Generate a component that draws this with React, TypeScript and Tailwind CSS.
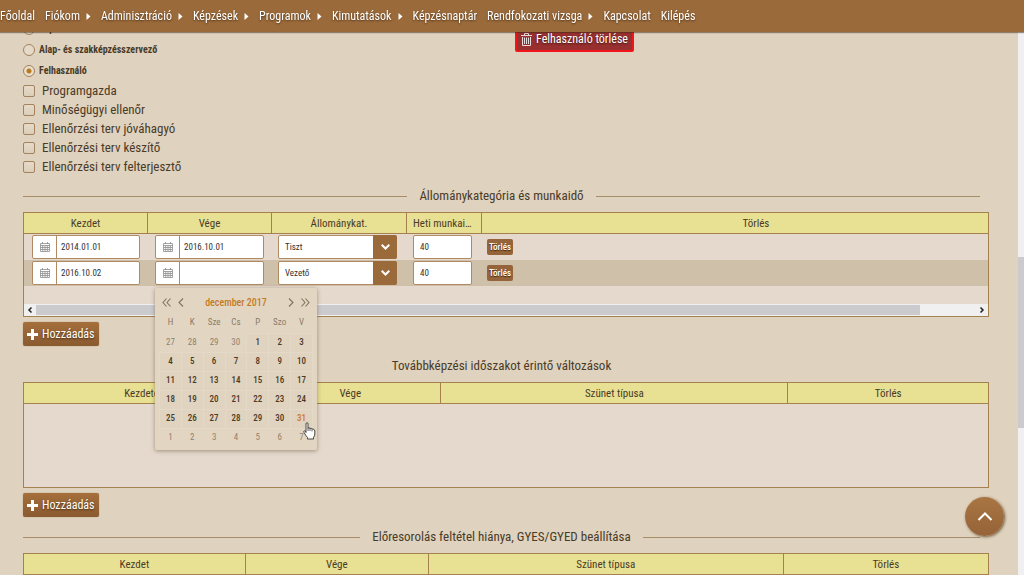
import { useState } from 'react';

const NAV = [
  { label: 'Főoldal', sub: false },
  { label: 'Fiókom', sub: true },
  { label: 'Adminisztráció', sub: true },
  { label: 'Képzések', sub: true },
  { label: 'Programok', sub: true },
  { label: 'Kimutatások', sub: true },
  { label: 'Képzésnaptár', sub: false },
  { label: 'Rendfokozati vizsga', sub: true },
  { label: 'Kapcsolat', sub: false },
  { label: 'Kilépés', sub: false },
];

const ROLES = ['Képzésszervező', 'Alap- és szakképzésszervező', 'Felhasználó'];

const PERMISSIONS = [
  'Programgazda',
  'Minőségügyi ellenőr',
  'Ellenőrzési terv jóváhagyó',
  'Ellenőrzési terv készítő',
  'Ellenőrzési terv felterjesztő',
];

const WEEKDAYS = ['H', 'K', 'Sze', 'Cs', 'P', 'Szo', 'V'];

// Monday 27 November 2017 is the first cell
const WEEKS = Array.from({ length: 6 }, (_, w) =>
  Array.from({ length: 7 }, (_, d) => {
    const date = new Date(2017, 10, 27 + w * 7 + d);
    return { day: date.getDate(), current: date.getMonth() === 11 };
  }),
);

const Header = () => {
  return (
    <header className="fixed inset-x-0 top-0 z-20 h-8 bg-[#9b6a3a] shadow-[0_1px_1px_rgba(60,40,20,0.5)]">
      <nav className="flex h-full items-center gap-2.5 text-xs text-white [text-shadow:0_1px_2px_rgba(50,30,10,0.7)]">
        {NAV.map((item) => (
          <a key={item.label} href="#" className="flex items-center gap-1.5 whitespace-nowrap">
            {item.label}
            {item.sub && (
              <svg width="5" height="7" viewBox="0 0 5 7" aria-hidden="true">
                <path d="M0.5 0 L4.5 3.5 L0.5 7 Z" fill="#fff" />
              </svg>
            )}
          </a>
        ))}
      </nav>
    </header>
  );
};

const RoleSection = () => {
  const [role, setRole] = useState('Felhasználó');
  return (
    <div>
      {ROLES.map((name) => (
        <label key={name} className="flex h-[21px] items-center gap-1 text-[10px] font-bold">
          <input
            type="radio"
            name="role"
            checked={role === name}
            onChange={() => setRole(name)}
            className="size-3 appearance-none rounded-full border border-[#a3835f] bg-[#e5d9c8] checked:bg-[radial-gradient(circle,#b8791f_2px,#e9dfcc_3px)]"
          />
          {name}
        </label>
      ))}
      {PERMISSIONS.map((name) => (
        <label key={name} className="flex h-[19px] items-center gap-[7px] text-[13px]">
          <input
            type="checkbox"
            className="size-3 appearance-none rounded-xs border border-[#a3835f] bg-linear-to-b from-[#e6dac9] to-[#dccfb9] checked:from-[#9b6a3a] checked:to-[#9b6a3a]"
          />
          {name}
        </label>
      ))}
    </div>
  );
};

const DeleteUserButton = () => {
  return (
    <button className="mt-2 flex h-[26px] items-center gap-1 rounded-xs border-2 border-[#f0141c] bg-[#97302f] px-1 text-xs text-white [text-shadow:0_1px_2px_rgba(0,0,0,0.6)]">
      <svg width="11" height="13" viewBox="0 0 11 13" fill="none" stroke="#e6dada" aria-hidden="true">
        <path d="M0 2.5 H11 M3.5 2 V0.5 H7.5 V2" />
        <path d="M1.5 4 V12.5 H9.5 V4 M3.5 4.5 V11 M5.5 4.5 V11 M7.5 4.5 V11" />
      </svg>
      Felhasználó törlése
    </button>
  );
};

const SectionTitle = ({ children, lines = true }: { children: string; lines?: boolean }) => {
  const line = lines ? 'h-px flex-1 bg-[#a88e68]' : 'h-px flex-1';
  return (
    <div className="mt-[10px] mr-[9px] flex h-5 items-center gap-3">
      <span className={line} />
      <h2 className="text-[13px]">{children}</h2>
      <span className={line} />
    </div>
  );
};

const AddButton = () => {
  return (
    <button className="mt-[5px] flex h-6 items-center gap-1 rounded-xs bg-linear-to-b from-[#a56f3b] to-[#8a5a30] px-1 text-xs text-white shadow-[0_0_1px_rgba(70,40,10,0.6)] [text-shadow:0_1px_2px_rgba(50,30,10,0.8)]">
      <svg width="11" height="11" viewBox="0 0 11 11" aria-hidden="true">
        <path d="M4 0 H7 V4 H11 V7 H7 V11 H4 V7 H0 V4 H4 Z" fill="#fff" />
      </svg>
      Hozzáadás
    </button>
  );
};

const TH = 'h-[21px] truncate border-r border-b border-[#a5814f] bg-[#e8e092] px-1.5 pt-0.5 text-center text-[11px] font-normal last:border-r-0';

const HandCursor = () => {
  return (
    <svg className="pointer-events-none absolute top-3 left-3 z-10" width="13" height="18" viewBox="0 0 13 18" aria-hidden="true">
      <path
        d="M3 10.5 V1.8 Q3 0.7 4 0.7 Q5 0.7 5 1.8 V6.5 Q5.1 5.6 6 5.7 Q7 5.8 7 6.8 Q7.2 6 8 6.2 Q9 6.4 9 7.4 Q9.3 6.8 10.2 7.1 Q11.8 7.5 11.8 9 V12 Q11.8 14 10.5 15.3 V17 H4.5 V15.5 Q2.6 13.5 1 10.4 Q0.4 9.2 1.3 8.8 Q2.2 8.5 3 10.5 Z"
        fill="#fff"
        stroke="#333"
        strokeWidth="0.9"
      />
      <path d="M5 6.5 V9 M7 7 V9 M9 7.5 V9.4" stroke="#333" strokeWidth="0.8" />
    </svg>
  );
};

const Chevron = ({ label, d }: { label: string; d: string }) => {
  return (
    <button aria-label={label}>
      <svg width="9" height="9" viewBox="0 0 9 9" fill="none" stroke="#83725c" strokeWidth="1.1">
        <path d={d} />
      </svg>
    </button>
  );
};

const Calendar = () => {
  return (
    <div className="absolute top-[26px] -left-px z-10 w-[162px] rounded-xs bg-[#e2d6c3] px-1 pt-1 pb-[3px] shadow-[0_1px_4px_rgba(90,70,40,0.5)]">
      <div className="flex h-5 items-center gap-1.5 px-[3px]">
        <Chevron label="Előző év" d="M4.5 0.5 L1 4.5 L4.5 8.5 M8.5 0.5 L5 4.5 L8.5 8.5" />
        <Chevron label="Előző hónap" d="M6 0.5 L2 4.5 L6 8.5" />
        <span className="flex-1 text-center text-[10px] font-medium text-[#c57a25]">december 2017</span>
        <Chevron label="Következő hónap" d="M3 0.5 L7 4.5 L3 8.5" />
        <Chevron label="Következő év" d="M0.5 0.5 L4 4.5 L0.5 8.5 M4.5 0.5 L8 4.5 L4.5 8.5" />
      </div>
      <table className="w-full table-fixed border-collapse text-center text-[9px]">
        <thead>
          <tr>
            {WEEKDAYS.map((d) => (
              <th key={d} className="h-[21px] font-normal text-[#8a7b67]">
                {d}
              </th>
            ))}
          </tr>
        </thead>
        <tbody>
          {WEEKS.map((week, w) => (
            <tr key={w}>
              {week.map(({ day, current }) => {
                const hovered = current && day === 31;
                return (
                  <td
                    key={day}
                    className={
                      current
                        ? 'relative h-[19px] border border-[#e4d9c6] bg-[#e0d3c0] font-medium'
                        : 'h-[19px] text-[#8f8270]'
                    }
                  >
                    <button className={hovered ? 'text-[#cc7a1c]' : ''}>{day}</button>
                    {hovered && <HandCursor />}
                  </td>
                );
              })}
            </tr>
          ))}
        </tbody>
      </table>
    </div>
  );
};

const DateField = ({ label, value, open = false }: { label: string; value: string; open?: boolean }) => {
  return (
    <div className="relative flex h-6 rounded-xs border border-[#b08a62] bg-white">
      <button
        aria-label="Naptár"
        className="flex w-6 shrink-0 items-center justify-center border-r border-[#b08a62]"
      >
        <svg width="10" height="10" viewBox="0 0 10 10" fill="none" stroke="#8d8d8d" strokeWidth="0.8">
          <path d="M0.5 1.5 H9.5 V9.5 H0.5 Z M0.5 3.5 H9.5 M0.5 5.5 H9.5 M0.5 7.5 H9.5 M2.7 3.5 V9.5 M5 3.5 V9.5 M7.3 3.5 V9.5 M2.5 0 V2 M7.5 0 V2" />
        </svg>
      </button>
      <input aria-label={label} defaultValue={value} className="w-full min-w-0 px-1 pt-px text-[9px] text-[#333] outline-none" />
      {open && <Calendar />}
    </div>
  );
};

const STAFF_ROWS = [
  { start: '2014.01.01', end: '2016.10.01', category: 'Tiszt', hours: '40' },
  { start: '2016.10.02', end: '', category: 'Vezető', hours: '40' },
];

const StaffTable = () => {
  return (
    <div className="mt-1.5 border border-[#a5814f] bg-[#e5d9cd]">
      <table className="w-full table-fixed border-separate border-spacing-0">
        <colgroup>
          <col className="w-[124px]" />
          <col className="w-[124px]" />
          <col className="w-[135px]" />
          <col className="w-[75px]" />
          <col />
        </colgroup>
        <thead>
          <tr>
            <th className={TH}>Kezdet</th>
            <th className={TH}>Vége</th>
            <th className={TH}>Állománykat.</th>
            <th className={TH}>Heti munkaidő</th>
            <th className={`${TH} pl-12`}>Törlés</th>
          </tr>
        </thead>
        <tbody>
          {STAFF_ROWS.map((row) => (
            <tr key={row.start} className="h-[26px] even:bg-[#cfc0a9]">
              <td className="px-2">
                <DateField label="Kezdet" value={row.start} />
              </td>
              <td className="pr-2 pl-[7px]">
                <DateField label="Vége" value={row.end} open={row.end === ''} />
              </td>
              <td className="pr-2.5 pl-1.5">
                <div className="relative">
                  <select
                    aria-label="Állománykat."
                    defaultValue={row.category}
                    className="block h-6 w-full appearance-none rounded-xs border border-[#b08a62] bg-white px-1.5 pt-0.5 text-[9px] text-[#333]"
                  >
                    <option>Tiszt</option>
                    <option>Vezető</option>
                  </select>
                  <span className="pointer-events-none absolute inset-y-0 right-0 flex w-6 items-center justify-center rounded-r-xs bg-[#9b6a3a]">
                    <svg width="9" height="6" viewBox="0 0 9 6" fill="none" stroke="#fff" strokeWidth="2">
                      <path d="M0.7 0.8 L4.5 4.5 L8.3 0.8" />
                    </svg>
                  </span>
                </div>
              </td>
              <td className="pr-2.5 pl-1.5">
                <input
                  aria-label="Heti munkaidő"
                  defaultValue={row.hours}
                  className="block h-6 w-full rounded-xs border border-[#b08a62] bg-white px-1.5 text-[9px] text-[#333]"
                />
              </td>
              <td className="px-[5px]">
                <button className="block h-4 rounded-xs bg-[#95643a] px-0.5 text-[9px] leading-4 font-medium text-white [text-shadow:0_1px_1px_rgba(40,20,0,0.8)]">
                  Törlés
                </button>
              </td>
            </tr>
          ))}
        </tbody>
      </table>
      <div className="mt-[18px] flex h-3 items-center bg-[#f0f0f0]">
        <svg width="12" height="12" viewBox="0 0 12 12" fill="none" stroke="#222" strokeWidth="1.5">
          <path d="M7.5 3.5 L5 6 L7.5 8.5" />
        </svg>
        <div className="flex h-full flex-1">
          <div className="h-2.5 w-[94%] self-center bg-[#cbcbcd]" />
        </div>
        <svg width="12" height="12" viewBox="0 0 12 12" fill="none" stroke="#222" strokeWidth="1.5">
          <path d="M4.5 3.5 L7 6 L4.5 8.5" />
        </svg>
      </div>
    </div>
  );
};

const BreakTable = ({ columns }: { columns: { name: string; width: string }[] }) => {
  return (
    <div className="mt-1.5 h-[106px] border border-[#a5814f] bg-[#e5d9cd]">
      <table className="w-full table-fixed border-separate border-spacing-0">
        <thead>
          <tr>
            {columns.map((col) => (
              <th key={col.name} className={`${TH} ${col.width}`}>
                {col.name}
              </th>
            ))}
          </tr>
        </thead>
      </table>
    </div>
  );
};

const ScrollTrack = () => {
  return (
    <div className="flex w-1.5 flex-col bg-[#f0eff2]">
      <div className="flex-[257]" />
      <div className="flex-[171] bg-[#cbcace]" />
      <div className="flex-[147]" />
    </div>
  );
};

export default function App() {
  return (
    <div className="flex h-screen overflow-hidden bg-[#dfd2be] font-['Roboto_Condensed','Liberation_Sans_Narrow',Roboto,sans-serif] text-[#4a3b28]">
      <Header />
      <main className="h-full min-w-0 flex-1 overflow-hidden pt-[18px] pr-[29px] pl-[23px]">
        <div className="grid grid-cols-2 items-start gap-[18px]">
          <RoleSection />
          <div>
            <DeleteUserButton />
          </div>
        </div>

        <SectionTitle>Állománykategória és munkaidő</SectionTitle>
        <StaffTable />
        <AddButton />

        <SectionTitle lines={false}>Továbbképzési időszakot érintő változások</SectionTitle>
        <BreakTable
          columns={[
            { name: 'Kezdete', width: 'w-[24.5%]' },
            { name: 'Vége', width: 'w-[18.8%]' },
            { name: 'Szünet típusa', width: 'w-[36%]' },
            { name: 'Törlés', width: 'w-auto' },
          ]}
        />
        <AddButton />

        <SectionTitle>Előresorolás feltétel hiánya, GYES/GYED beállítása</SectionTitle>
        <BreakTable
          columns={[
            { name: 'Kezdet', width: 'w-[23%]' },
            { name: 'Vége', width: 'w-[19%]' },
            { name: 'Szünet típusa', width: 'w-[36.8%]' },
            { name: 'Törlés', width: 'w-auto' },
          ]}
        />
      </main>
      <ScrollTrack />
      <button
        aria-label="Oldal teteje"
        className="fixed right-5 bottom-[39px] z-10 flex size-[39px] items-center justify-center rounded-full bg-linear-to-b from-[#a97543] to-[#956338] shadow-[1px_1px_3px_rgba(70,40,10,0.7)]"
      >
        <svg width="16" height="11" viewBox="0 0 16 11" fill="none" stroke="#fff" strokeWidth="2">
          <path d="M1.5 9 L8 2.5 L14.5 9" />
        </svg>
      </button>
    </div>
  );
}
